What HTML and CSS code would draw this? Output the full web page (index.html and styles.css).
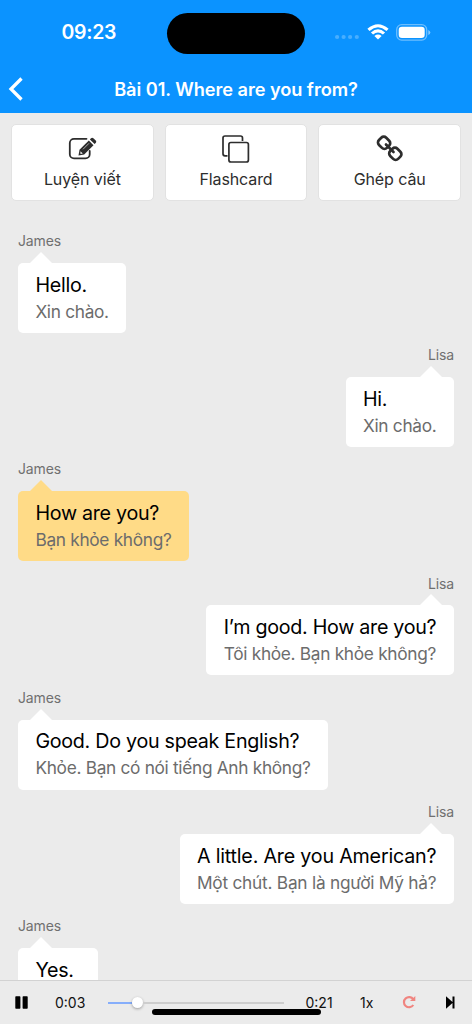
FILE: index.html
```
<!DOCTYPE html>
<html lang="vi">
<head>
<meta charset="utf-8">
<meta name="viewport" content="width=device-width, initial-scale=1">
<title>Bài 01. Where are you from?</title>
<link rel="stylesheet" href="styles.css">
</head>
<body>
<div class="app">
  <header class="header">
    <div class="status">
      <div class="clock"><span>09:23</span></div>
      <div class="island"></div>
      <div class="indicators">
        <svg width="24" height="6" viewBox="0 0 24 6" class="signal"><g fill="#fff" opacity=".25"><circle cx="2.1" cy="3" r="2.1"/><circle cx="8.6" cy="3" r="2.1"/><circle cx="15.1" cy="3" r="2.1"/><circle cx="21.8" cy="3" r="2.1"/></g></svg>
        <svg width="22" height="16" viewBox="0 0 22 16" class="wifi"><g fill="#fff"><path d="M.4 4.8Q11-4.2 21.6 4.8L19.5 7Q11-.4 2.5 7Z"/><path d="M3.9 8.4Q11 2.3 18.1 8.4L15.9 10.6Q11 6.5 6.1 10.6Z"/><path d="M7.4 11.9Q11 9.2 14.6 11.9L11 15.6Z"/></g></svg>
        <svg width="35" height="17" viewBox="0 0 35 17"><rect x=".7" y=".7" width="30" height="15.4" rx="5" fill="none" stroke="#fff" stroke-opacity=".4" stroke-width="1.3"/><rect x="2.7" y="2.8" width="26" height="11.2" rx="3.3" fill="#fff"/><path d="M32.3 6v5q2-1 2-2.5T32.3 6Z" fill="#fff" opacity=".5"/></svg>
      </div>
    </div>
    <div class="nav">
      <svg class="back" width="16" height="24" viewBox="0 0 16 24"><path d="M13.500 1.500 3 12 13.500 22.500" fill="none" stroke="#fff" stroke-width="3.300"/></svg>
      <h1 class="title">Bài 01. Where are you from?</h1>
    </div>
  </header>

  <nav class="actions">
    <button class="action">
      <svg width="30" height="30" viewBox="0 0 30 30"><path d="M19.500 5.800H7a4.200 4.200 0 0 0-4.200 4.200v11.200A4.200 4.200 0 0 0 7 25.400h11.500a4.200 4.200 0 0 0 4.200-4.200V18" fill="none" stroke="#2d2d2d" stroke-width="1.800" stroke-linecap="round"/><path d="m11.500 22.600 1-5.800L21.800 7.500l4.700 4.700L17.200 21.500Z" fill="#2d2d2d"/><path d="m22.900 6.400 1.100-1.100a1.700 1.700 0 0 1 2.400 0l2.300 2.300a1.700 1.700 0 0 1 0 2.400l-1.100 1.100Z" fill="#2d2d2d"/><path d="m16 16.300 6-6" stroke="#fff" stroke-width=".6"/><path d="m13.400 18.200 2.400 2.400-2.300.4Z" fill="#fff"/></svg>
      <span>Luyện viết</span>
    </button>
    <button class="action">
      <svg width="30" height="30" viewBox="0 0 30 30"><g fill="none" stroke="#2d2d2d" stroke-width="1.700"><rect x="7.900" y="9.500" width="19.500" height="19.500" rx="2"/><path d="M6.500 22.800H4a2 2 0 0 1-2-2V5a2 2 0 0 1 2-2h15.500a2 2 0 0 1 2 2v3"/></g></svg>
      <span>Flashcard</span>
    </button>
    <button class="action">
      <svg width="30" height="30" viewBox="0 0 30 30"><g fill="none" stroke="#2d2d2d" stroke-width="2.700"><rect x="-5.600" y="-5.100" width="11.200" height="10.200" rx="3.500" transform="translate(9.100 9.800) rotate(45)"/><rect x="-5.600" y="-5.100" width="11.200" height="10.200" rx="3.500" transform="translate(20.300 20.800) rotate(45)"/><path d="m11 11.500 7.500 7.500" stroke-linecap="round"/></g></svg>
      <span>Ghép câu</span>
    </button>
  </nav>

  <main class="chat">
    <section class="msg"><div class="name">James</div><div class="bubble"><p class="en">Hello.</p><p class="vi">Xin chào.</p></div></section>
    <section class="msg right"><div class="name">Lisa</div><div class="bubble"><p class="en">Hi.</p><p class="vi">Xin chào.</p></div></section>
    <section class="msg active"><div class="name">James</div><div class="bubble"><p class="en">How are you?</p><p class="vi">Bạn khỏe không?</p></div></section>
    <section class="msg right"><div class="name">Lisa</div><div class="bubble"><p class="en">I’m good. How are you?</p><p class="vi">Tôi khỏe. Bạn khỏe không?</p></div></section>
    <section class="msg"><div class="name">James</div><div class="bubble"><p class="en">Good. Do you speak English?</p><p class="vi">Khỏe. Bạn có nói tiếng Anh không?</p></div></section>
    <section class="msg right wide"><div class="name">Lisa</div><div class="bubble"><p class="en">A little. Are you American?</p><p class="vi">Một chút. Bạn là người Mỹ hả?</p></div></section>
    <section class="msg"><div class="name">James</div><div class="bubble"><p class="en">Yes.</p></div></section>
  </main>

  <footer class="player">
    <svg class="pause" width="13" height="13" viewBox="0 0 13 13"><path d="M1 .3h3.700q.7 0 .7.700v11q0 .7-.7.700H1q-.7 0-.7-.7V1Q.3.300 1 .3Zm7.300 0H12q.7 0 .7.700v11q0 .7-.7.700H8.300q-.7 0-.7-.7V1q0-.7.700-.7Z"/></svg>
    <span class="elapsed">0:03</span>
    <div class="track"><div class="played"></div><div class="thumb"></div><div class="rest"></div></div>
    <span class="total">0:21</span>
    <span class="speed">1x</span>
    <svg class="repeat" width="14" height="14" viewBox="0 0 14 14"><path d="M11.300 4.300A5.100 5.100 0 1 0 11.300 10" fill="none" stroke="#f08580" stroke-width="2.200"/><path d="M13.300.900v5.200H8Z" fill="#f08580"/></svg>
    <svg class="next" width="9" height="13" viewBox="0 0 9 13"><path d="M0 .3 6.500 6V.5h2v12h-2V7L0 12.700Z"/></svg>
    <div class="home"></div>
  </footer>
</div>
</body>
</html>
```
FILE: styles.css
```
* { box-sizing: border-box; }
body { margin: 0; font-family: Inter, "Noto Sans", sans-serif; background: #ebebeb; }
.app { width: 472px; height: 1024px; display: flex; flex-direction: column; overflow: hidden; background: #ebebeb; }

.header { height: 113.300px; flex: none; background: #0b93ff; color: #fff; }
.status { height: 65px; display: grid; grid-template-columns: 167px 138px 167px; }
.clock { padding: 20px 0 0 61.500px; font-size: 19.500px; font-weight: 580; line-height: 25px; letter-spacing: -.3px; }
.island { height: 41px; margin-top: 12.500px; border-radius: 21px; background: #000; }
.indicators { display: flex; align-items: flex-start; padding: 24px 0 0 29.500px; }
.signal { margin-top: 10px; }
.wifi { margin: 0 7px 0 8px; }
.nav { height: 47px; display: grid; grid-template-columns: 40px 1fr 40px; align-items: center; }
.back { margin-left: 8px; }
.title { margin: 0; text-align: center; font-size: 18.200px; font-weight: 580; line-height: 24px; letter-spacing: -.05px; white-space: nowrap; }

.actions { flex: none; display: grid; grid-template-columns: repeat(3, 1fr); gap: 11px; padding: 11px 11px 0; height: 116.500px; }
.action { height: 77px; display: flex; flex-direction: column; align-items: center; padding: 8px 0 0; border: 1px solid #e2e2e2; border-radius: 5px; background: #fff; color: #2d2d2d; font-family: inherit; font-size: 16px; line-height: 24px; letter-spacing: -.1px; }
.action span { margin-top: 4px; }

.chat { flex: 1; min-height: 0; overflow: hidden; padding: 0 18px; }
.msg { height: 114.200px; display: flex; flex-direction: column; align-items: flex-start; }
.right { align-items: flex-end; }
.name { height: 33px; padding-top: 1.300px; font-size: 14px; line-height: 20px; letter-spacing: -.15px; color: #707070; }
.bubble { position: relative; height: 70px; min-width: 80px; padding: 8.900px 17.600px 0 17.400px; border-radius: 5px; background: #fff; }
.bubble::before { content: ""; position: absolute; left: 12px; top: -11px; border: 11px solid transparent; border-top: 0; border-bottom-color: #fff; }
.right .bubble::before { left: auto; right: 12px; }
.active .bubble { background: #ffdb87; }
.active .bubble::before { border-bottom-color: #ffdb87; }
.bubble p { margin: 0; white-space: nowrap; }
.en { font-size: 19.700px; line-height: 27px; letter-spacing: -.28px; color: #000; }
.vi { font-size: 17.300px; line-height: 26px; letter-spacing: -.31px; color: #6c6c6c; }
.wide .en { letter-spacing: -.2px; }
.wide .vi { letter-spacing: -.24px; }

.player { position: relative; flex: none; height: 44px; display: flex; align-items: center; border-top: 1px solid #d2d2d2; font-size: 14px; color: #111; padding-left: 15px; }
.elapsed { width: 53px; margin-left: 27px; }
.track { display: flex; align-items: center; width: 176px; }
.played { width: 24px; height: 2px; background: #86aefb; }
.thumb { width: 11px; height: 11px; border-radius: 50%; background: #fff; box-shadow: 0 1px 3px #0005; }
.rest { flex: 1; height: 2px; background: #cdcdcd; }
.total { width: 54.500px; margin-left: 21.500px; }
.speed { width: 41.500px; }
.repeat { margin-top: -2px; }
.next { margin-left: 30.500px; margin-top: -1px; }
.home { position: absolute; left: 151.500px; bottom: 9px; width: 169px; height: 6px; border-radius: 3px; background: #000; }
```
